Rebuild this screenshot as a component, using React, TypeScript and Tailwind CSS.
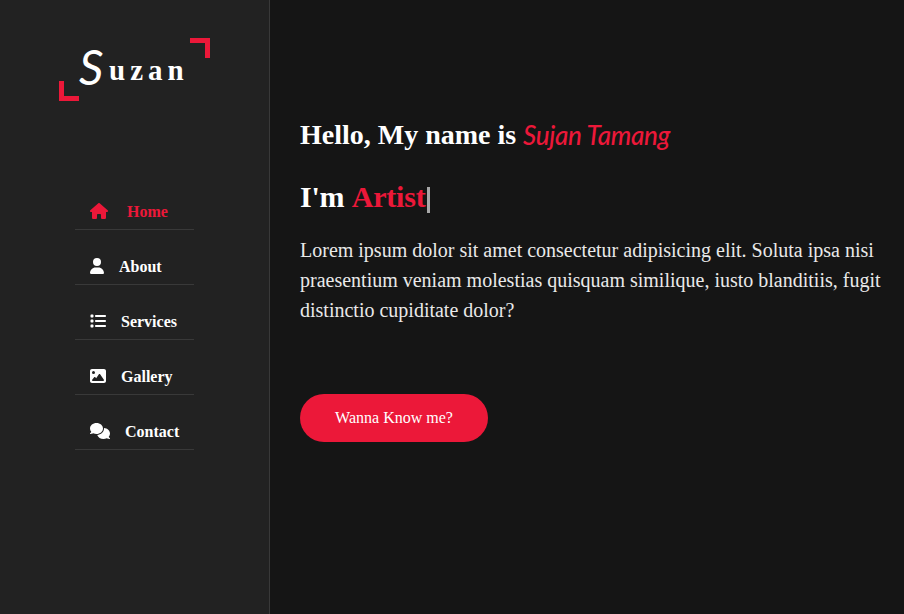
import { FaComments, FaHouse, FaImage, FaList, FaUser } from "react-icons/fa6";

const links = [
  { label: "Home", icon: FaHouse, size: "w-[18px] mr-[19px]", color: "text-[#ec1839]" },
  { label: "About", icon: FaUser, size: "w-[14px] mr-[15px]", color: "text-white" },
  { label: "Services", icon: FaList, size: "w-4 mr-[15px]", color: "text-white" },
  { label: "Gallery", icon: FaImage, size: "w-4 mr-[15px]", color: "text-white" },
  { label: "Contact", icon: FaComments, size: "w-5 mr-[15px]", color: "text-white" },
];

function Logo() {
  return (
    <a className="relative mt-[38px] ml-[59px] flex h-[63px] w-[151px] items-center pl-[20px] text-white">
      <span className="mb-[5px] w-[30px] shrink-0 font-['Lato',sans-serif] text-[48px] leading-none font-normal italic">S</span>
      <span className="mt-[2px] text-[29px] leading-none font-bold tracking-[5px]">uzan</span>
      <span className="absolute top-0 right-0 size-5 border-t-[5px] border-r-[5px] border-[#ec1839]" />
      <span className="absolute bottom-0 left-0 size-5 border-b-[5px] border-l-[5px] border-[#ec1839]" />
    </a>
  );
}

function Sidebar() {
  return (
    <aside className="h-full w-[270px] shrink-0 border-r border-[#393939] bg-[#222222]">
      <Logo />
      <ul className="mt-[74px] ml-[75px] w-[119px]">
        {links.map(({ label, icon: Icon, size, color }) => (
          <li key={label} className="flex h-[55px] flex-col justify-end">
            <a className={`flex h-[45px] items-center border-b border-[#393939] pt-[9px] pl-[15px] text-base font-bold ${color}`}>
              <Icon className={`mb-[2px] h-4 shrink-0 ${size}`} />
              {label}
            </a>
          </li>
        ))}
      </ul>
    </aside>
  );
}

export default function App() {
  return (
    <div className="flex h-[614px] w-[904px] overflow-hidden bg-[#151515] font-['Liberation_Serif',serif]">
      <Sidebar />
      <main className="flex-1 pt-[117px] pl-[30px]">
        <h3 className="flex h-9 items-center text-[28px] font-bold whitespace-nowrap text-white">
          <span className="w-[223px]">Hello, My name is</span>
          <span className="font-['Lato',sans-serif] text-[26px] font-medium tracking-[-0.3px] text-[#ec1839] italic">Sujan Tamang</span>
        </h3>
        <h3 className="mt-[25px] flex h-9 items-center text-[30px] font-bold tracking-[-0.2px] whitespace-pre text-white">
          I'm <span className="text-[#ec1839]">Artist</span>
          <span className="mt-[7px] ml-[2px] h-[26px] w-[3px] bg-[#a8a8a8]" />
        </h3>
        <p className="mt-[21px] w-[594px] text-[20px] leading-[30px] text-[#e9e9e9]">
          Lorem ipsum dolor sit amet consectetur adipisicing elit. Soluta ipsa nisi
          praesentium veniam molestias quisquam similique, iusto blanditiis, fugit
          distinctio cupiditate dolor?
        </p>
        <a className="mt-[69px] flex h-12 w-[188px] items-center justify-center rounded-full bg-[#ec1839] text-base text-white">
          Wanna Know me?
        </a>
      </main>
    </div>
  );
}
